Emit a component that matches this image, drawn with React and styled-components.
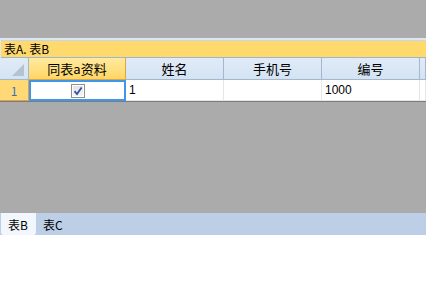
import React from "react";
import styled, { createGlobalStyle } from "styled-components";

const Global = createGlobalStyle`
  html, body { margin: 0; padding: 0; background: #ffffff; }
  body { font-family: "Noto Sans CJK SC", "Liberation Sans", sans-serif; font-size: 12px; color: #000; }
`;

const Page = styled.div`
  width: 426px;
  height: 290px;
  display: flex;
  flex-direction: column;
  overflow: hidden;
  background: #ffffff;
`;

const GrayArea = styled.div`
  height: ${(p) => p.$h}px;
  background: #ababab;
  flex: none;
`;

const GridPanel = styled.div`
  background: #dde7f4;
  padding-top: 2px;
  border-bottom: 1px solid #7c7c7c;
  flex: none;
`;

const GroupBar = styled.div`
  height: 16px;
  margin-left: 1px;
  background: #ffd96c;
  border-top: 1px solid #c7d5e8;
  border-bottom: 1px solid #9fb5cf;
  display: flex;
  align-items: center;
  padding-left: 3px;
  font-size: 12px;
  line-height: 16px;
`;

const Grid = styled.div`
  display: grid;
  grid-template-columns: 29px 97px 98px 98px 98px 1fr;
`;

const HeadCell = styled.div`
  height: 22px;
  box-sizing: border-box;
  display: flex;
  align-items: center;
  justify-content: center;
  font-size: 13px;
  background: ${(p) =>
    p.$sel ? "linear-gradient(#ffeaa0, #ffd664)" : "linear-gradient(#e0ebf7, #d4e3f3)"};
  border-right: 1px solid ${(p) => (p.$sel ? "#e3a43f" : "#a3b8cf")};
  border-bottom: 1px solid ${(p) => (p.$sel ? "#e3a43f" : "#a3b8cf")};
  position: relative;
`;

const Corner = styled.div`
  position: absolute;
  right: 4px;
  bottom: 3px;
  width: 0;
  height: 0;
  border-left: 12px solid transparent;
  border-bottom: 12px solid #b4c2d2;
`;

const RowHead = styled.div`
  height: 21px;
  box-sizing: border-box;
  background: #ffd975;
  border-right: 1px solid #dba24c;
  border-bottom: 1px solid #dba24c;
  color: #3b6db8;
  display: flex;
  align-items: center;
  justify-content: center;
  font-size: 12px;
`;

const Cell = styled.div`
  height: 21px;
  box-sizing: border-box;
  background: #ffffff;
  border-right: 1px solid #e6e6e6;
  border-bottom: 1px solid #e6e6e6;
  display: flex;
  align-items: center;
  justify-content: ${(p) => (p.$center ? "center" : "flex-start")};
  padding-left: ${(p) => (p.$center ? 0 : 3)}px;
  font-family: "Liberation Sans", sans-serif;
  font-size: 12px;
  ${(p) => p.$active && "border: 2px solid #3e97ea;"}
`;

const CheckBox = styled.div`
  width: 12px;
  height: 12px;
  border: 1px solid #8f8f8f;
  box-shadow: inset 0 0 0 1px #ffffff;
  background: linear-gradient(#e2e2e2, #f6f6f6);
  display: flex;
  align-items: center;
  justify-content: center;
`;

const TabBar = styled.div`
  height: 22px;
  background: #bccfe6;
  display: flex;
  align-items: stretch;
  padding-left: 1px;
  flex: none;
`;

const Tab = styled.div`
  width: ${(p) => p.$w}px;
  display: flex;
  align-items: center;
  padding-left: 7px;
  box-sizing: border-box;
  font-size: 12px;
  background: ${(p) => (p.$active ? "#f2f7fd" : "transparent")};
  border-radius: 0 0 3px 3px;
`;

const White = styled.div`
  flex: 1;
  background: #ffffff;
`;

export default function App() {
  return (
    <Page>
      <Global />
      <GrayArea $h={38} />
      <GridPanel>
        <GroupBar>表A. 表B</GroupBar>
        <Grid>
          <HeadCell>
            <Corner />
          </HeadCell>
          <HeadCell $sel>同表a资料</HeadCell>
          <HeadCell>姓名</HeadCell>
          <HeadCell>手机号</HeadCell>
          <HeadCell>编号</HeadCell>
          <HeadCell />
          <RowHead>1</RowHead>
          <Cell $center $active>
            <CheckBox>
              <svg width="10" height="10" viewBox="0 0 10 10">
                <path d="M1.5 5.2 L4 8 L8.6 1.5" fill="none" stroke="#3452a8" strokeWidth="1.8" />
              </svg>
            </CheckBox>
          </Cell>
          <Cell>1</Cell>
          <Cell />
          <Cell>1000</Cell>
          <Cell />
        </Grid>
      </GridPanel>
      <GrayArea $h={111} />
      <TabBar>
        <Tab $w={35} $active>表B</Tab>
        <Tab $w={40}>表C</Tab>
      </TabBar>
      <White />
    </Page>
  );
}
